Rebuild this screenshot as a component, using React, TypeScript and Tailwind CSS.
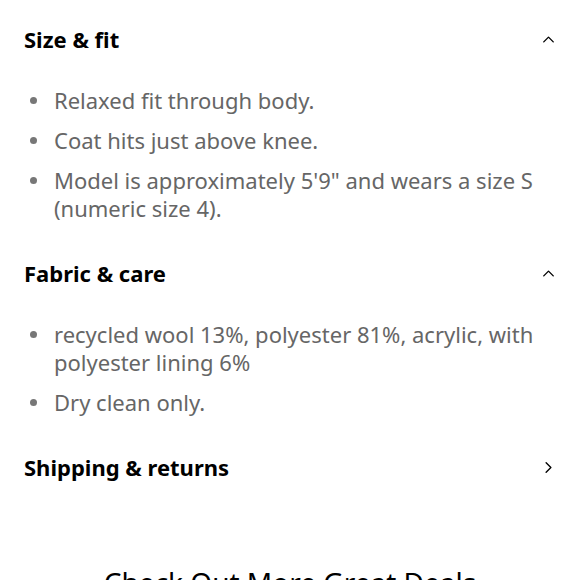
import { ChevronUp, ChevronRight } from 'lucide-react'

const sections = [
  {
    title: 'Size & fit',
    open: true,
    items: [
      'Relaxed fit through body.',
      'Coat hits just above knee.',
      'Model is approximately 5\'9" and wears a size S (numeric size 4).',
    ],
  },
  {
    title: 'Fabric & care',
    open: true,
    items: ['recycled wool 13%, polyester 81%, acrylic, with polyester lining 6%', 'Dry clean only.'],
  },
  { title: 'Shipping & returns', open: false, items: [] as string[] },
]

function Section({ title, open, items }: { title: string; open: boolean; items: string[] }) {
  return (
    <section>
      <div className="flex h-[78px] items-center justify-between pl-6 pr-[22px]">
        <h2 className="text-[22px] font-bold text-black">{title}</h2>
        {open ? (
          <ChevronUp className="h-[19px] w-[19px] text-black" strokeWidth={1.75} />
        ) : (
          <ChevronRight className="h-[19px] w-[19px] text-black" strokeWidth={1.75} />
        )}
      </div>
      {open && (
        <ul className="flex flex-col gap-3 pb-[12px] pl-6 pr-8 pt-2">
          {items.map((it) => (
            <li key={it} className="flex text-[22px] leading-[28px] text-[#666]">
              <span className="flex h-[28px] w-[30px] shrink-0 items-center pl-[6px]">
                <span className="h-[7px] w-[7px] rounded-full bg-[#777]" />
              </span>
              <span>{it}</span>
            </li>
          ))}
        </ul>
      )}
    </section>
  )
}

export default function App() {
  return (
    <main className="h-[580px] w-[580px] overflow-hidden bg-white font-['Noto_Sans',sans-serif]">
      {sections.map((s) => (
        <Section key={s.title} {...s} />
      ))}
      <p className="mt-[58px] text-center text-[28px] leading-[36px] text-black">Check Out More Great Deals</p>
    </main>
  )
}
